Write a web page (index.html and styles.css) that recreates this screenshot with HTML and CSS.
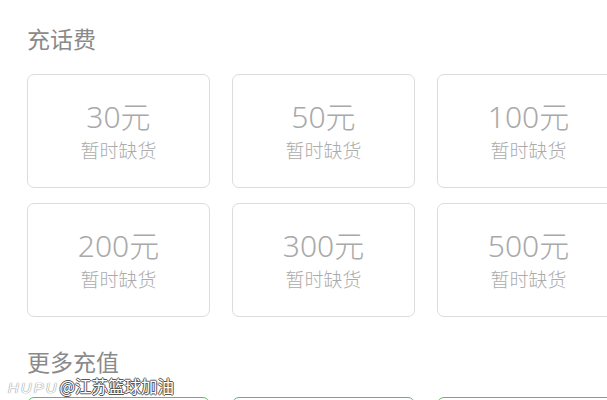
FILE: index.html
```html
<!DOCTYPE html>
<html lang="zh">
<head>
<meta charset="utf-8">
<link rel="stylesheet" href="styles.css">
</head>
<body>
<div class="page">
  <div class="section-title first">充话费</div>
  <div class="grid">
    <div class="card"><div class="amount">30元</div><div class="status">暂时缺货</div></div>
    <div class="card"><div class="amount">50元</div><div class="status">暂时缺货</div></div>
    <div class="card"><div class="amount">100元</div><div class="status">暂时缺货</div></div>
    <div class="card"><div class="amount">200元</div><div class="status">暂时缺货</div></div>
    <div class="card"><div class="amount">300元</div><div class="status">暂时缺货</div></div>
    <div class="card"><div class="amount">500元</div><div class="status">暂时缺货</div></div>
  </div>
  <div class="section-title second">更多充值</div>
  <div class="grid more">
    <div class="card green"></div>
    <div class="card green"></div>
    <div class="card green"></div>
  </div>
</div>
<div class="watermark"><span class="hupu">HUPU</span><span class="handle">@江苏篮球加油</span></div>
</body>
</html>
```
FILE: styles.css
```css
html, body {
  margin: 0;
  padding: 0;
  background: #fff;
  overflow: hidden;
  width: 607px;
  height: 400px;
}
body {
  font-family: "Noto Sans CJK SC", "Noto Sans", sans-serif;
  position: relative;
}
.page {
  padding-left: 27px;
}
.section-title {
  font-size: 23px;
  line-height: 30px;
  color: #8a8a8a;
  font-weight: 400;
}
.section-title.first {
  padding-top: 23px;
  margin-bottom: 21px;
}
.section-title.second {
  margin-top: 29px;
  margin-bottom: 21px;
}
.grid {
  display: grid;
  grid-template-columns: repeat(3, 183px);
  grid-auto-rows: 114px;
  column-gap: 22px;
  row-gap: 15px;
  width: 800px;
}
.card {
  box-sizing: border-box;
  border: 1px solid #dcdcdc;
  border-radius: 7px;
  display: flex;
  flex-direction: column;
  align-items: center;
  justify-content: center;
}
.card.green {
  border-color: #5fb86f;
}
.amount {
  font-family: "Noto Sans", "Noto Sans CJK SC", sans-serif;
  font-weight: 300;
  font-size: 30px;
  line-height: 36px;
  color: #a9a9a9;
}
.status {
  margin-top: 2px;
  font-size: 19px;
  line-height: 26px;
  color: #ababab;
  font-weight: 300;
}
.watermark {
  position: absolute;
  left: 8px;
  top: 375px;
  line-height: 22px;
  white-space: nowrap;
  display: flex;
  align-items: baseline;
}
.hupu {
  font-family: "Liberation Sans", sans-serif;
  font-style: italic;
  font-size: 15px;
  letter-spacing: 2px;
  color: #fff;
  text-shadow: 0 0 1px #888, 0 0 1px #888;
  margin-right: 1px;
}
.handle {
  font-size: 16.5px;
  color: #fff;
  text-shadow: -1px 0 #555, 1px 0 #555, 0 -1px #555, 0 1px #555;
}
```
